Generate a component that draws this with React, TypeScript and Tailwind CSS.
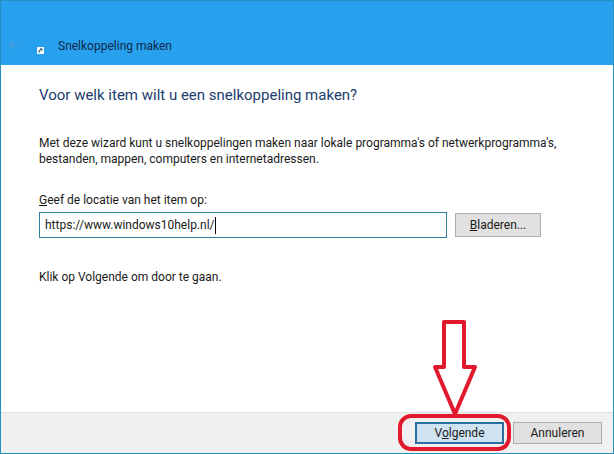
export default function App() {
  return (
    <div className="relative flex h-[454px] w-[614px] flex-col overflow-hidden border border-[#2391b8] bg-white font-['Roboto',sans-serif] text-[12px] text-[#1a1a1a]">
      {/* Title bar */}
      <div className="flex h-[64px] shrink-0 items-end bg-[#27a0ee] pb-[11px]">
        <svg width="14" height="12" viewBox="0 0 14 12" className="mb-[3px] ml-[7px]" fill="none" stroke="#4f9ed6" strokeWidth="1.2">
          <path d="M13 6H2M6 2 2 6l4 4" />
        </svg>
        <svg width="7" height="7" viewBox="0 0 7 7" className="ml-[15px]">
          <rect width="7" height="7" fill="#f4f8fb" />
          <path d="M2.2 5.5V3.6L4.2 2.4M3.4 1.6 5 2 4.6 3.6" fill="none" stroke="#1c3f66" strokeWidth="1" />
        </svg>
        <span className="ml-[14px] text-[12px] leading-[16px] text-[#10294d]">Snelkoppeling maken</span>
      </div>

      {/* Content */}
      <div className="flex flex-1 flex-col pl-[38px] pr-[22px]">
        <h1 className="mt-[19px] text-[15px] leading-[22px] text-[#1c3d6e]">Voor welk item wilt u een snelkoppeling maken?</h1>
        <p className="mt-[29px] w-[552px] leading-[16px]">
          Met deze wizard kunt u snelkoppelingen maken naar lokale programma's of netwerkprogramma's, bestanden, mappen, computers en internetadressen.
        </p>
        <label className="mt-[25px] leading-[16px]">
          <u>G</u>eef de locatie van het item op:
        </label>
        <div className="mt-[4px] flex items-center">
          <div className="flex h-[26px] w-[408px] items-center border border-[#2f7d9c] pl-[5px] text-[12px]">
            https://www.windows10help.nl/<span className="h-[17px] w-px bg-black" />
          </div>
          <button className="ml-[8px] h-[24px] w-[86px] border border-[#adadad] bg-[#e1e1e1] text-[12px]">
            <u>B</u>laderen...
          </button>
        </div>
        <p className="mt-[31px] leading-[16px]">Klik op Volgende om door te gaan.</p>
      </div>

      {/* Footer */}
      <div className="flex h-[41px] shrink-0 items-center justify-end border-t border-[#dfdfdf] bg-[#f0f0f0] pr-[11px]">
        <button className="h-[22px] w-[89px] border-2 border-[#2a6f9f] bg-[#cfe3f2] text-[12px]">
          V<u>o</u>lgende
        </button>
        <button className="ml-[9px] h-[22px] w-[89px] border border-[#adadad] bg-[#e1e1e1] text-[12px]">Annuleren</button>
      </div>

      {/* Red annotation */}
      <svg width="614" height="454" viewBox="0 0 614 454" className="pointer-events-none absolute left-[-1px] top-[-1px]" fill="none" stroke="#e0192d" strokeWidth="4">
        <path d="M444 322H464V367H475L455 414L435 367H444Z" strokeLinejoin="round" />
        <rect x="400" y="416" width="109" height="33" rx="11" />
      </svg>
    </div>
  );
}
